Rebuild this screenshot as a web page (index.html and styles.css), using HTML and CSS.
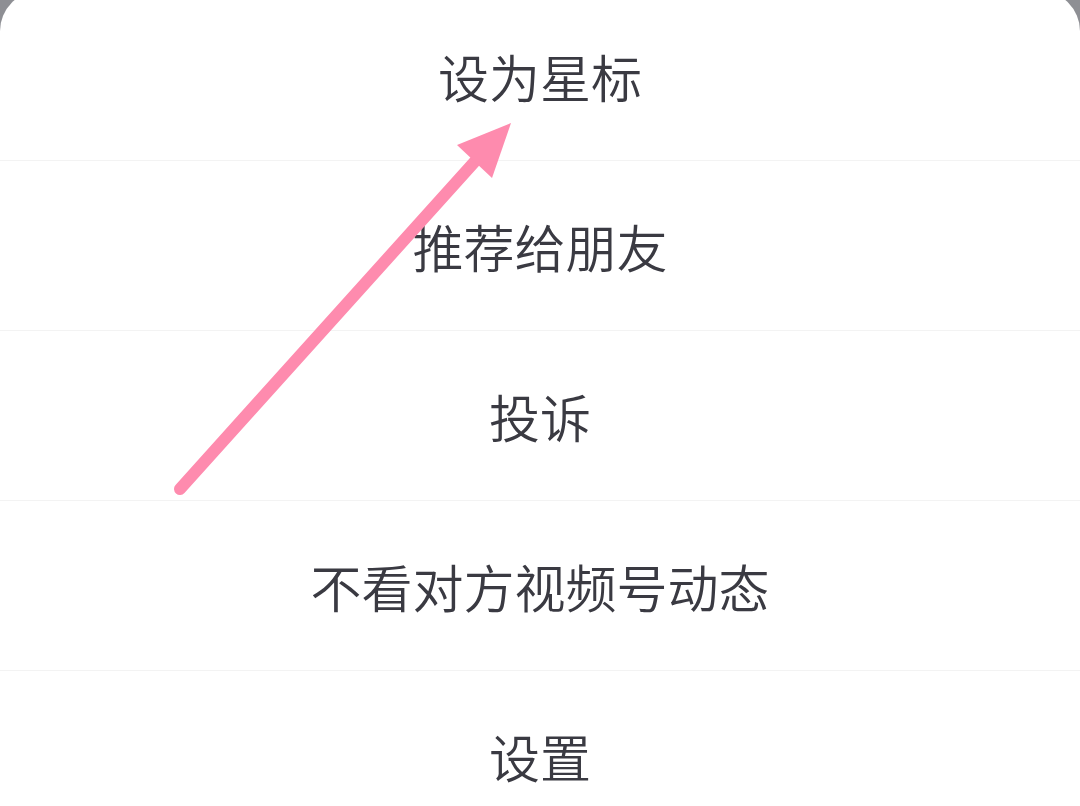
FILE: index.html
```html
<!DOCTYPE html>
<html lang="zh-CN">
<head>
<meta charset="utf-8">
<link rel="stylesheet" href="styles.css">
</head>
<body>
<div class="sheet">
  <div class="item">设为星标</div>
  <div class="item">推荐给朋友</div>
  <div class="item">投诉</div>
  <div class="item">不看对方视频号动态</div>
  <div class="item">设置</div>
</div>
<svg class="arrow" width="1080" height="806" viewBox="0 0 1080 806">
  <line x1="180" y1="489" x2="478" y2="158" stroke="#fe8bae" stroke-width="12" stroke-linecap="round"/>
  <polygon points="511,123 457,145 492,178" fill="#fe8bae"/>
</svg>
</body>
</html>
```
FILE: styles.css
```css
html, body {
  margin: 0;
  padding: 0;
  width: 1080px;
  height: 806px;
  overflow: hidden;
  background: #8e8f94;
}
.sheet {
  margin-top: -9px;
  background: #ffffff;
  border-radius: 40px 40px 0 0;
  height: 815px;
  overflow: hidden;
  display: flex;
  flex-direction: column;
}
.item {
  flex: 0 0 auto;
  height: 169px;
  border-bottom: 1px solid #f3f3f3;
  display: flex;
  align-items: center;
  justify-content: center;
  font-family: "Noto Sans CJK SC", "Noto Sans", sans-serif;
  font-size: 51px;
  font-weight: 350;
  color: #3a3a42;
}
.arrow {
  position: absolute;
  left: 0;
  top: 0;
}
```
